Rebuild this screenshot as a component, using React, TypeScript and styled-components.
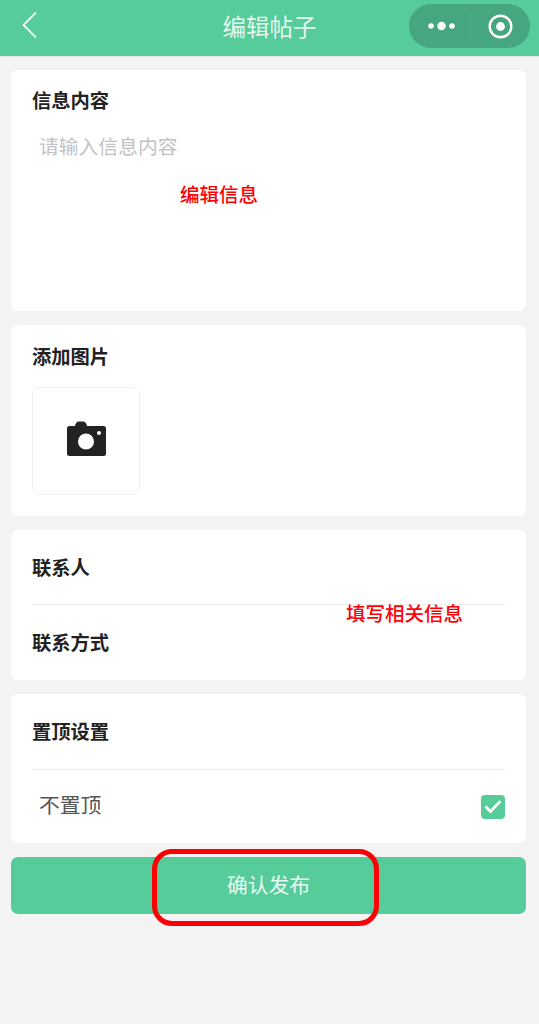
import React from 'react'
import styled, { createGlobalStyle } from 'styled-components'

const COLORS = {
  green: '#55cc9a',
  greenDark: '#46a680',
  page: '#f3f3f3',
  white: '#ffffff',
  text: '#222222',
  line: '#ececec',
  red: '#fd0006',
}

const GlobalStyle = createGlobalStyle`
  html, body {
    margin: 0;
    padding: 0;
    background: ${COLORS.page};
  }
  body {
    font-family: 'Liberation Sans', 'Noto Sans CJK SC', sans-serif;
  }
`

const Page = styled.div`
  position: relative;
  width: 539px;
  height: 1024px;
  overflow: hidden;
  background: ${COLORS.page};
`

const NavBar = styled.header`
  height: 57px;
  background: ${COLORS.green};
  border-bottom: 1px solid #e6e6e6;
  box-sizing: border-box;
  display: grid;
  grid-template-columns: 1fr auto 1fr;
  align-items: center;
  padding: 0 9px;
`

const BackButton = styled.div`
  display: flex;
  align-items: center;
  height: 26px;
  margin: 0 0 6px 13px;
`

const NavTitle = styled.h1`
  margin: 0 0 4px;
  font-size: 23.5px;
  font-weight: 400;
  color: ${COLORS.white};
  opacity: 0.85;
`

const Capsule = styled.div`
  justify-self: end;
  width: 121px;
  height: 44px;
  margin-bottom: 4px;
  border-radius: 22px;
  background: ${COLORS.greenDark};
  display: grid;
  grid-template-columns: 61px 1px 59px;
  align-items: center;
  justify-items: center;
`

const MoreDots = styled.svg`
  margin-left: 3px;
`

const CapsuleDivider = styled.span`
  width: 1px;
  height: 26px;
  background: #54b08b;
`

const Content = styled.main`
  display: flex;
  flex-direction: column;
  gap: 14px;
  padding: 13px 13px 0 11px;
`

const Card = styled.section<{ $height: number }>`
  height: ${(p) => p.$height}px;
  box-sizing: border-box;
  background: ${COLORS.white};
  border-radius: 7px;
  padding: 0 21px;
  display: flex;
  flex-direction: column;
`

const Label = styled.div<{ $top?: number }>`
  padding-top: ${(p) => p.$top ?? 0}px;
  font-size: 19.3px;
  line-height: 26px;
  font-weight: 700;
  color: ${COLORS.text};
`

const Placeholder = styled.div`
  margin: 19px 0 0 7px;
  font-size: 19.8px;
  line-height: 26px;
  color: #c2c2c4;
`

const UploadBox = styled.div`
  margin-top: 16px;
  width: 108px;
  height: 108px;
  box-sizing: border-box;
  border: 1px solid #f1f1f1;
  border-radius: 7px;
  padding-bottom: 5px;
  display: flex;
  align-items: center;
  justify-content: center;
`

const Field = styled.div<{ $height: number; $divided?: boolean }>`
  height: ${(p) => p.$height}px;
  flex-shrink: 0;
  display: flex;
  align-items: center;
  justify-content: space-between;
  box-sizing: border-box;
  border-bottom: ${(p) => (p.$divided ? `1px solid ${COLORS.line}` : 'none')};
`

const OptionText = styled.span`
  margin: 0 0 6px 7px;
  font-size: 20.8px;
  color: #555555;
`

const CheckBox = styled.span`
  width: 24px;
  height: 24px;
  border-radius: 4px;
  background: ${COLORS.green};
  display: flex;
  align-items: center;
  justify-content: center;
`

const SubmitButton = styled.button`
  height: 57px;
  border: none;
  border-radius: 7px;
  background: ${COLORS.green};
  color: #eafaf3;
  font-family: inherit;
  font-size: 20.8px;
  padding: 0 0 4px;
`

const Note = styled.span<{ $x: number; $y: number }>`
  position: absolute;
  left: ${(p) => p.$x}px;
  top: ${(p) => p.$y}px;
  font-size: 19.5px;
  line-height: 26px;
  font-weight: 500;
  color: ${COLORS.red};
  white-space: nowrap;
`

const Highlight = styled.div`
  position: absolute;
  left: 152px;
  top: 849px;
  width: 227px;
  height: 77px;
  box-sizing: border-box;
  border: 5px solid ${COLORS.red};
  border-radius: 20px;
`

const App: React.FC = () => (
  <Page>
    <GlobalStyle />
    <NavBar>
      <BackButton>
        <svg width="15" height="26" viewBox="0 0 15 26" fill="none">
          <path d="M13.5 1 L1.500 13 L13.5 25" stroke="#fff" strokeWidth="1.800" strokeLinecap="round" strokeLinejoin="round" opacity="0.9" />
        </svg>
      </BackButton>
      <NavTitle>编辑帖子</NavTitle>
      <Capsule>
        <MoreDots width="27" height="10" viewBox="0 0 27 10" fill="#fff">
          <circle cx="3" cy="5" r="2.800" />
          <circle cx="13.5" cy="5" r="4.200" />
          <circle cx="24" cy="5" r="2.800" />
        </MoreDots>
        <CapsuleDivider />
        <svg width="25" height="25" viewBox="0 0 25 25" fill="none">
          <circle cx="12.5" cy="12.5" r="10.800" stroke="#fff" strokeWidth="2.400" />
          <circle cx="12.5" cy="12.5" r="4.400" fill="#fff" />
        </svg>
      </Capsule>
    </NavBar>

    <Content>
      <Card $height={241}>
        <Label $top={19}>信息内容</Label>
        <Placeholder>请输入信息内容</Placeholder>
      </Card>

      <Card $height={191}>
        <Label $top={20}>添加图片</Label>
        <UploadBox>
          <svg width="39" height="35" viewBox="0 0 39 35">
            <path
              fillRule="evenodd"
              fill="#222"
              d="M2.500 5H8C8.500 2 10 .5 12 .5h4c2 0 3.500 1.500 4 4.500h16.500A2.500 2.500 0 0 1 39 7.500v25a2.500 2.500 0 0 1-2.500 2.500h-34A2.500 2.500 0 0 1 0 32.500v-25A2.500 2.500 0 0 1 2.500 5zM19 12.500a8 8 0 1 0 0 16 8 8 0 0 0 0-16zM32 10a2 2 0 1 0 0 4 2 2 0 0 0 0-4z"
            />
          </svg>
        </UploadBox>
      </Card>

      <Card $height={150}>
        <Field $height={75} $divided>
          <Label $top={3}>联系人</Label>
        </Field>
        <Field $height={75}>
          <Label $top={3}>联系方式</Label>
        </Field>
      </Card>

      <Card $height={149}>
        <Field $height={76} $divided>
          <Label $top={3}>置顶设置</Label>
        </Field>
        <Field $height={73}>
          <OptionText>不置顶</OptionText>
          <CheckBox>
            <svg width="18" height="15" viewBox="0 0 18 15" fill="none">
              <path d="M1.500 7.500 L6.500 12.500 L16.500 2" stroke="#fff" strokeWidth="2.800" />
            </svg>
          </CheckBox>
        </Field>
      </Card>

      <SubmitButton>确认发布</SubmitButton>
    </Content>

    <Note $x={180} $y={182}>编辑信息</Note>
    <Note $x={346} $y={601}>填写相关信息</Note>
    <Highlight />
  </Page>
)

export default App
